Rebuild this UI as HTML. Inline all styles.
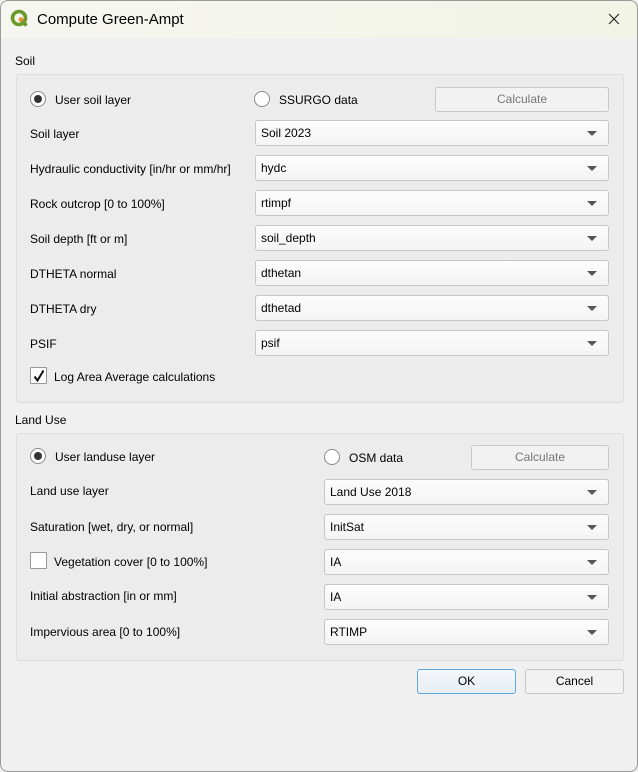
<!DOCTYPE html>
<html><head><meta charset="utf-8"><style>
*{box-sizing:border-box;margin:0;padding:0}
body{width:638px;height:772px;background:#f0f0f0;font-family:"Liberation Sans",sans-serif;font-size:12px;color:#000;position:relative;overflow:hidden}
.a{position:absolute}
.win{position:absolute;left:0;top:0;width:638px;height:772px;border-radius:8px;overflow:hidden;background:#f0f0f0}
.frame{position:absolute;left:0;top:0;width:638px;height:772px;border:1px solid #9a9a9a;border-radius:8px;pointer-events:none}
.title{position:absolute;left:0;top:0;width:638px;height:38px;background:linear-gradient(90deg,#f6f6f1,#f2f4e6);}
.grp{position:absolute;border:1px solid #dcdcdc;border-radius:3px;background:#ececec}
.cb{position:absolute;height:26px;border:1px solid #c6c6c6;border-radius:3px;background:linear-gradient(#fcfcfc,#f4f4f4);padding-left:5px;line-height:24px;font-size:12px}
.cb:after{content:"";position:absolute;right:11px;top:10px;border-left:5px solid transparent;border-right:5px solid transparent;border-top:5px solid #555}
.btn{position:absolute;height:25px;border:1px solid #c8c8c8;border-radius:3px;background:#f2f2f2;text-align:center;line-height:23px}
.lbl{position:absolute;line-height:14px}
.rad{position:absolute;width:16px;height:16px;border:1px solid #8a8a8a;border-radius:50%;background:#fff}
.rad.on:after{content:"";position:absolute;left:3px;top:3px;width:8px;height:8px;border-radius:50%;background:#333}
.chk{position:absolute;width:17px;height:17px;border:1px solid #999;background:#fff;border-radius:1px}
</style></head><body><div class="win">
<div class="title"></div>
<svg class="a" style="left:10px;top:9px" width="20" height="20" viewBox="0 0 20 20"><circle cx="9" cy="9" r="6.5" fill="none" stroke="#6b9a2a" stroke-width="3.6"/><path d="M11 11 L16.5 16.5" stroke="#6b9a2a" stroke-width="3.6"/><circle cx="11" cy="10.5" r="2.3" fill="#f08a2a"/></svg>
<div class="lbl" style="left:37px;top:11px;font-size:15px;line-height:17px">Compute Green-Ampt</div>
<svg class="a" style="left:608px;top:13px" width="12" height="12" viewBox="0 0 12 12"><path d="M1 1L11 11M11 1L1 11" stroke="#222" stroke-width="1.1"/></svg>

<div class="lbl" style="left:15px;top:54px">Soil</div>
<div class="grp" style="left:16px;top:74px;width:608px;height:329px"></div>
<div class="rad on" style="left:30px;top:91px"></div>
<div class="lbl" style="left:55px;top:93px">User soil layer</div>
<div class="rad" style="left:254px;top:91px"></div>
<div class="lbl" style="left:279px;top:93px">SSURGO data</div>
<div class="btn" style="left:435px;top:87px;width:174px;color:#777">Calculate</div>

<div class="lbl" style="left:30px;top:127px">Soil layer</div><div class="cb" style="left:255px;top:120px;width:354px">Soil 2023</div>
<div class="lbl" style="left:30px;top:162px">Hydraulic conductivity [in/hr or mm/hr]</div><div class="cb" style="left:255px;top:155px;width:354px">hydc</div>
<div class="lbl" style="left:30px;top:197px">Rock outcrop [0 to 100%]</div><div class="cb" style="left:255px;top:190px;width:354px">rtimpf</div>
<div class="lbl" style="left:30px;top:232px">Soil depth [ft or m]</div><div class="cb" style="left:255px;top:225px;width:354px">soil_depth</div>
<div class="lbl" style="left:30px;top:267px">DTHETA normal</div><div class="cb" style="left:255px;top:260px;width:354px">dthetan</div>
<div class="lbl" style="left:30px;top:302px">DTHETA dry</div><div class="cb" style="left:255px;top:295px;width:354px">dthetad</div>
<div class="lbl" style="left:30px;top:337px">PSIF</div><div class="cb" style="left:255px;top:330px;width:354px">psif</div>
<div class="chk" style="left:30px;top:367px"></div>
<svg class="a" style="left:32px;top:369px" width="14" height="14" viewBox="0 0 14 14"><path d="M2.5 7.5L5.5 11.5L11.5 1.5" fill="none" stroke="#111" stroke-width="2"/></svg>
<div class="lbl" style="left:54px;top:370px">Log Area Average calculations</div>

<div class="lbl" style="left:15px;top:413px">Land Use</div>
<div class="grp" style="left:16px;top:433px;width:608px;height:228px"></div>
<div class="rad on" style="left:30px;top:448px"></div>
<div class="lbl" style="left:55px;top:450px">User landuse layer</div>
<div class="rad" style="left:324px;top:449px"></div>
<div class="lbl" style="left:349px;top:451px">OSM data</div>
<div class="btn" style="left:471px;top:445px;width:138px;color:#777">Calculate</div>

<div class="lbl" style="left:30px;top:484px">Land use layer</div><div class="cb" style="left:324px;top:479px;width:285px">Land Use 2018</div>
<div class="lbl" style="left:30px;top:520px">Saturation [wet, dry, or normal]</div><div class="cb" style="left:324px;top:514px;width:285px">InitSat</div>
<div class="chk" style="left:30px;top:552px"></div>
<div class="lbl" style="left:54px;top:555px">Vegetation cover [0 to 100%]</div><div class="cb" style="left:324px;top:549px;width:285px">IA</div>
<div class="lbl" style="left:30px;top:589px">Initial abstraction [in or mm]</div><div class="cb" style="left:324px;top:584px;width:285px">IA</div>
<div class="lbl" style="left:30px;top:625px">Impervious area [0 to 100%]</div><div class="cb" style="left:324px;top:619px;width:285px">RTIMP</div>

<div class="btn" style="left:417px;top:669px;width:99px;border-color:#5aa9e6;background:linear-gradient(#f4f7fa,#e8eef4)">OK</div>
<div class="btn" style="left:525px;top:669px;width:99px">Cancel</div>
</div><div class="frame"></div></body></html>
